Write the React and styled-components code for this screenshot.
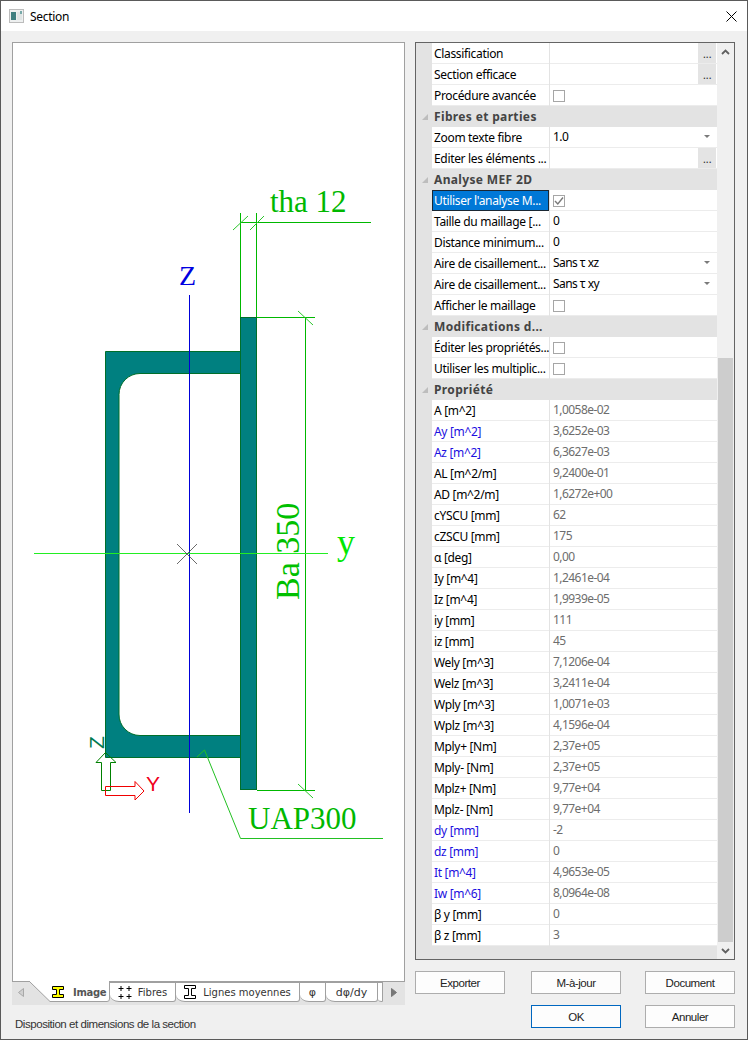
import React from 'react';
import styled, { createGlobalStyle } from 'styled-components';

const GlobalStyle = createGlobalStyle`
  html, body {
    margin: 0;
    padding: 0;
    background: #f0f0f0;
  }
  * {
    box-sizing: border-box;
  }
`;

const UI_FONT = `"Noto Sans", "Open Sans", sans-serif`;
const BUTTON_FONT = `"Liberation Sans", Arial, sans-serif`;
const TAB_FONT = `"DejaVu Sans", Verdana, sans-serif`;
const SERIF = `"Liberation Serif", "Times New Roman", serif`;

// Property grid rows, top to bottom
const rows = [
  { label: 'Classification', type: 'dots' },
  { label: 'Section efficace', type: 'dots' },
  { label: 'Procédure avancée', type: 'check' },
  { label: 'Fibres et parties', type: 'header' },
  { label: 'Zoom texte fibre', type: 'select', value: '1.0' },
  { label: 'Editer les éléments ...', type: 'dots' },
  { label: 'Analyse MEF 2D', type: 'header' },
  { label: "Utiliser l'analyse M...", type: 'check', checked: true, selected: true },
  { label: 'Taille du maillage [...', type: 'edit', value: '0' },
  { label: 'Distance minimum...', type: 'edit', value: '0' },
  { label: 'Aire de cisaillement...', type: 'select', value: 'Sans τ xz' },
  { label: 'Aire de cisaillement...', type: 'select', value: 'Sans τ xy' },
  { label: 'Afficher le maillage', type: 'check' },
  { label: 'Modifications d...', type: 'header' },
  { label: 'Éditer les propriétés...', type: 'check' },
  { label: 'Utiliser les multiplic...', type: 'check' },
  { label: 'Propriété', type: 'header' },
  { label: 'A [m^2]', value: '1,0058e-02' },
  { label: 'Ay [m^2]', value: '3,6252e-03', blue: true },
  { label: 'Az [m^2]', value: '6,3627e-03', blue: true },
  { label: 'AL [m^2/m]', value: '9,2400e-01' },
  { label: 'AD [m^2/m]', value: '1,6272e+00' },
  { label: 'cYSCU [mm]', value: '62' },
  { label: 'cZSCU [mm]', value: '175' },
  { label: 'α [deg]', value: '0,00' },
  { label: 'Iy [m^4]', value: '1,2461e-04' },
  { label: 'Iz [m^4]', value: '1,9939e-05' },
  { label: 'iy [mm]', value: '111' },
  { label: 'iz [mm]', value: '45' },
  { label: 'Wely [m^3]', value: '7,1206e-04' },
  { label: 'Welz [m^3]', value: '3,2411e-04' },
  { label: 'Wply [m^3]', value: '1,0071e-03' },
  { label: 'Wplz [m^3]', value: '4,1596e-04' },
  { label: 'Mply+ [Nm]', value: '2,37e+05' },
  { label: 'Mply- [Nm]', value: '2,37e+05' },
  { label: 'Mplz+ [Nm]', value: '9,77e+04' },
  { label: 'Mplz- [Nm]', value: '9,77e+04' },
  { label: 'dy [mm]', value: '-2', blue: true },
  { label: 'dz [mm]', value: '0', blue: true },
  { label: 'It [m^4]', value: '4,9653e-05', blue: true },
  { label: 'Iw [m^6]', value: '8,0964e-08', blue: true },
  { label: 'β y [mm]', value: '0' },
  { label: 'β z [mm]', value: '3' },
];

const Window = styled.div`
  width: 748px;
  height: 1040px;
  display: flex;
  flex-direction: column;
  background: #f0f0f0;
  border: 1px solid #5a5a5a;
  overflow: hidden;
`;

const TitleBar = styled.div`
  height: 30px;
  flex: none;
  display: flex;
  align-items: center;
  padding: 0 10px 0 8px;
  background: #fff;
  font: 12px ${UI_FONT};
  letter-spacing: -0.3px;
  color: #000;
`;

const TitleText = styled.span`
  margin-left: 6px;
  flex: 1;
`;

const Main = styled.div`
  flex: 1;
  display: grid;
  grid-template-columns: 393px 320px;
  column-gap: 10px;
  padding: 11px 0 0 11px;
`;

const LeftColumn = styled.div`
  display: flex;
  flex-direction: column;
`;

const Canvas = styled.div`
  height: 940px;
  background: #fff;
  border: 1px solid #a0a0a0;
`;

const TabStrip = styled.div`
  height: 23px;
  display: flex;
  background: #e3e3e3;
  font: 10px ${TAB_FONT};
  color: #333;
`;

const StripArrow = styled.div`
  flex: none;
  width: ${(p) => p.$width}px;
  display: flex;
  align-items: center;
  justify-content: center;
  height: 20px;
`;

const ActiveTab = styled.div`
  position: relative;
  flex: none;
  width: 80px;
  height: 21px;
  margin-top: -1px;
  display: flex;
  align-items: center;
  padding: 1px 0 0 22px;
  font-weight: 700;
  letter-spacing: -0.3px;
  color: #555;
`;

const ActiveTabShape = styled.svg`
  position: absolute;
  left: 0;
  top: 0;
`;

const ActiveTabContent = styled.div`
  position: relative;
  display: flex;
  align-items: center;
  gap: 9px;
`;

const Tab = styled.div`
  flex: none;
  width: ${(p) => p.$width}px;
  height: 20px;
  display: flex;
  align-items: center;
  justify-content: center;
  gap: ${(p) => p.$gap || 0}px;
  background: #fff;
  border-top: 1px solid #a0a0a0;
  border-right: 1px solid #a0a0a0;
  border-bottom: 1px solid #a0a0a0;
  border-bottom-left-radius: 9px 7px;
  border-bottom-right-radius: 3px;
  font-size: ${(p) => p.$size || 10}px;
  white-space: nowrap;
`;

const StatusText = styled.div`
  padding: 13px 0 0 3px;
  font: 11.5px ${BUTTON_FONT};
  letter-spacing: -0.45px;
  color: #333;
`;

const RightColumn = styled.div`
  display: flex;
  flex-direction: column;
`;

const GridBox = styled.div`
  height: 918px;
  display: flex;
  border: 1px solid #646464;
  background: #e3e3e3;
`;

const GridRows = styled.div`
  width: 301px;
  flex: none;
`;

const Row = styled.div`
  height: 21px;
  display: grid;
  grid-template-columns: 16px 117px 168px;
  font: 12px/20px ${UI_FONT};
  color: #000;
`;

const HeaderRow = styled.div`
  height: 21px;
  display: flex;
  align-items: center;
  font: 700 12px/21px ${UI_FONT};
  letter-spacing: 0.35px;
  color: #444;
`;

const Collapse = styled.div`
  width: 18px;
  flex: none;
  display: flex;
  justify-content: center;
`;

const Label = styled.div`
  height: 21px;
  padding: 1px 0 0 2px;
  white-space: nowrap;
  overflow: hidden;
  letter-spacing: -0.33px;
  background: ${(p) => (p.$selected ? '#0078d7' : '#fff')};
  color: ${(p) => (p.$selected ? '#fff' : p.$blue ? '#1c10e0' : '#000')};
  border-bottom: 1px solid #ececec;
  ${(p) => p.$selected && 'outline: 1px solid #1a2733; outline-offset: -1px; border-bottom: none;'}
`;

const Value = styled.div`
  height: 21px;
  display: flex;
  align-items: center;
  justify-content: space-between;
  padding: 0 0 1px 3px;
  margin-left: 1px;
  background: #fff;
  border-bottom: 1px solid #ececec;
  letter-spacing: -0.55px;
  color: ${(p) => (p.$muted ? '#6d6d6d' : '#000')};
`;

const CheckBox = styled.span`
  width: 12px;
  height: 12px;
  margin-top: 2px;
  display: flex;
  align-items: center;
  justify-content: center;
  background: #fff;
  border: 1px solid #a6a6a6;
`;

const DotsButton = styled.span`
  width: 18px;
  height: 20px;
  margin: 1px 1px 0 auto;
  text-align: center;
  background: #e4e4e4;
  color: #333;
  font: 12px/22px ${BUTTON_FONT};
`;

const DropArrow = styled.span`
  width: 0;
  height: 0;
  margin-right: 7px;
  border-left: 3px solid transparent;
  border-right: 3px solid transparent;
  border-top: 3px solid #7a7a7a;
`;

const ScrollBar = styled.div`
  width: 17px;
  flex: none;
  display: flex;
  flex-direction: column;
  background: #f0f0f0;
`;

const ScrollArrow = styled.div`
  height: 17px;
  flex: none;
  display: flex;
  align-items: center;
  justify-content: center;
`;

const ScrollTrack = styled.div`
  flex: 1;
  padding: 298px 1px 0;
  display: flex;
`;

const ScrollThumb = styled.div`
  flex: 1;
  background: #cdcdcd;
`;

const Buttons = styled.div`
  display: grid;
  grid-template-columns: 116px 114px 90px;
  grid-template-rows: 23px 23px;
  row-gap: 11px;
  margin-top: 11px;
`;

const Button = styled.button`
  width: 90px;
  height: 23px;
  grid-column: ${(p) => p.$col};
  padding: 0;
  background: #fdfdfd;
  border: 1px solid ${(p) => (p.$primary ? '#0067c0' : '#adadad')};
  font: 11.5px ${BUTTON_FONT};
  letter-spacing: -0.45px;
  color: #222;
`;

const AppIcon = () => (
  <svg width="15" height="14" viewBox="0 0 15 14">
    <rect x="0.5" y="0.5" width="14" height="13" fill="#eef0f0" stroke="#bcbcbc" />
    <rect x="2" y="3" width="5" height="8" fill="#3f7f80" />
    <rect x="8" y="3" width="5" height="8" fill="#dfe5e5" />
    <rect x="11" y="2" width="2" height="3" fill="#77a9a9" />
  </svg>
);

const CloseIcon = () => (
  <svg width="11" height="11" viewBox="0 0 11 11">
    <path d="M0.5 0.5 10.5 10.5 M10.5 0.5 0.5 10.5" stroke="#000" fill="none" />
  </svg>
);

const CollapseIcon = () => (
  <svg width="6" height="6" viewBox="0 0 6 6">
    <path d="M6 0 V6 H0 Z" fill="#bdbdbd" />
  </svg>
);

const Tick = () => (
  <svg width="10" height="10" viewBox="0 0 10 10">
    <path d="M1 5 3.8 8 9 1.5" stroke="#7a7a7a" strokeWidth="1.4" fill="none" />
  </svg>
);

const Chevron = ({ down }) => (
  <svg width="9" height="6" viewBox="0 0 9 6">
    <path d={down ? 'M1 1 4.5 4.5 8 1' : 'M1 5 4.5 1.5 8 5'} stroke="#606060" strokeWidth="1.8" fill="none" />
  </svg>
);

const BeamIcon = ({ fill, width, height }) => (
  <svg width={width} height={height} viewBox={`0 0 ${width} ${height}`}>
    <path
      d={`M.5 .5 H${width - 0.5} V3.5 H${width / 2 + 1.5} V${height - 3.5} H${width - 0.5} V${height - 0.5} H.5 V${height - 3.5} H${width / 2 - 1.5} V3.5 H.5 Z`}
      fill={fill}
      stroke="#000"
    />
  </svg>
);

const FibresIcon = () => (
  <svg width="14" height="13" viewBox="0 0 14 13">
    <path d="M3 0 V5 M.5 2.5 H5.5 M11 0 V5 M8.5 2.5 H13.5 M3 8 V13 M.5 10.5 H5.5 M11 8 V13 M8.5 10.5 H13.5" stroke="#000" fill="none" />
  </svg>
);

// Section drawing, the viewBox keeps the coordinates of the screenshot
const SectionDrawing = () => (
  <svg width="391" height="938" viewBox="13 43 391 938" style={{ display: 'block' }}>
    <path
      d="M105.5 351.5 H240.5 V373.5 H140 A21 21 0 0 0 119 394.5 V714 A21 21 0 0 0 140 735.5 H240.5 V757.5 H105.5 Z"
      fill="#008080"
      stroke="#006f2a"
    />
    <rect x="240.5" y="317.5" width="16" height="472" fill="#008080" stroke="#006f2a" />

    <path
      d="M240.5 213 V317 M256.5 213 V317 M240 222.5 H371 M257 317.5 H315 M305.5 317 V790 M257 790.5 H315"
      stroke="#00b800"
      fill="none"
    />
    <path
      d="M233 230 248 216 M250 230 264 216 M298 311 313 325 M298 784 313 798"
      stroke="#2cc62c"
      fill="none"
    />

    <path d="M189.5 295 V813" stroke="#0000d8" fill="none" />
    <path d="M34 553.5 H328" stroke="#22ee22" fill="none" />
    <path d="M177 544 197 564 M197 544 177 564" stroke="#444" strokeWidth="0.8" fill="none" />

    <path d="M197 757 204.5 750 L240.5 838.5 H383" stroke="#22c022" fill="none" />

    <path d="M105.5 752.5 L96 762.5 H101.5 V790.5 H110.5 V762.5 H116 Z" stroke="#008000" fill="none" />
    <path d="M105.5 786.5 H135 V781.5 L144 791 135 800 V795.5 H105.5 Z" stroke="#f00000" fill="none" />

    <text x="270" y="212" fontFamily={SERIF} fontSize="31" fill="#00b800">tha 12</text>
    <text x="179" y="285" fontFamily={SERIF} fontSize="28" fill="#0000e0">Z</text>
    <text x="337" y="554" fontFamily={SERIF} fontSize="36" fill="#00e800">y</text>
    <text transform="translate(299 600) rotate(-90)" fontFamily={SERIF} fontSize="34" fill="#00c000">Ba 350</text>
    <text x="248" y="829" fontFamily={SERIF} fontSize="31" fill="#00b800">UAP300</text>
    <text transform="translate(104 749) rotate(-90)" fontFamily={BUTTON_FONT} fontSize="21" fill="#007a50">Z</text>
    <text x="146" y="791" fontFamily={BUTTON_FONT} fontSize="21" fill="#f00020">Y</text>
  </svg>
);

const GridRow = ({ row }) => {
  if (row.type === 'header') {
    return (
      <HeaderRow>
        <Collapse><CollapseIcon /></Collapse>
        {row.label}
      </HeaderRow>
    );
  }
  return (
    <Row>
      <span />
      <Label $selected={row.selected} $blue={row.blue}>{row.label}</Label>
      <Value $muted={!row.type}>
        {row.type === 'check' && <CheckBox>{row.checked && <Tick />}</CheckBox>}
        {row.type === 'dots' && <DotsButton>...</DotsButton>}
        {row.value && <span>{row.value}</span>}
        {row.type === 'select' && <DropArrow />}
      </Value>
    </Row>
  );
};

const App = () => (
  <>
    <GlobalStyle />
    <Window>
      <TitleBar>
        <AppIcon />
        <TitleText>Section</TitleText>
        <CloseIcon />
      </TitleBar>
      <Main>
        <LeftColumn>
          <Canvas>
            <SectionDrawing />
          </Canvas>
          <TabStrip>
            <StripArrow $width={18}>
              <svg width="6" height="9" viewBox="0 0 6 9">
                <path d="M5.5 .5 V8.5 L.5 4.5 Z" fill="#d0d0d0" stroke="#a8a8a8" />
              </svg>
            </StripArrow>
            <ActiveTab>
              <ActiveTabShape width="80" height="21" viewBox="0 0 80 21">
                <path d="M0 1 L20 20.5 H77 Q79.5 20.5 79.5 18 V0 H0 Z" fill="#fff" />
                <path d="M0 1 L20 20.5 H77 Q79.5 20.5 79.5 18 V0" fill="none" stroke="#a0a0a0" />
              </ActiveTabShape>
              <ActiveTabContent>
                <BeamIcon fill="#ffff00" width={12} height={12} />
                Image
              </ActiveTabContent>
            </ActiveTab>
            <Tab $width={66} $gap={6}><FibresIcon />Fibres</Tab>
            <Tab $width={124} $gap={7}><BeamIcon fill="#fff" width={12} height={14} />Lignes moyennes</Tab>
            <Tab $width={26} $size={11}>φ</Tab>
            <Tab $width={52} $size={11}>dφ/dy</Tab>
            <Tab $width={5} />
            <StripArrow $width={22}>
              <svg width="6" height="9" viewBox="0 0 6 9">
                <path d="M.5 .5 V8.5 L5.5 4.5 Z" fill="#777" stroke="#777" />
              </svg>
            </StripArrow>
          </TabStrip>
          <StatusText>Disposition et dimensions de la section</StatusText>
        </LeftColumn>
        <RightColumn>
          <GridBox>
            <GridRows>
              {rows.map((row, i) => (
                <GridRow key={i} row={row} />
              ))}
            </GridRows>
            <ScrollBar>
              <ScrollArrow><Chevron /></ScrollArrow>
              <ScrollTrack><ScrollThumb /></ScrollTrack>
              <ScrollArrow><Chevron down /></ScrollArrow>
            </ScrollBar>
          </GridBox>
          <Buttons>
            <Button $col={1}>Exporter</Button>
            <Button $col={2}>M-à-jour</Button>
            <Button $col={3}>Document</Button>
            <Button $col={2} $primary>OK</Button>
            <Button $col={3}>Annuler</Button>
          </Buttons>
        </RightColumn>
      </Main>
    </Window>
  </>
);

export default App;
